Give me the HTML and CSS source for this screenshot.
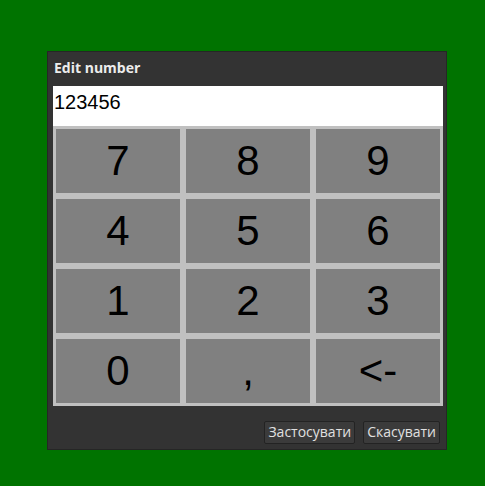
FILE: index.html
```html
<!DOCTYPE html>
<html>
<head>
<meta charset="utf-8">
<link rel="stylesheet" href="styles.css">
</head>
<body>
<div class="dialog">
  <div class="title">Edit number</div>
  <div class="field">123456</div>
  <div class="keypad">
    <div class="key">7</div>
    <div class="key">8</div>
    <div class="key">9</div>
    <div class="key">4</div>
    <div class="key">5</div>
    <div class="key">6</div>
    <div class="key">1</div>
    <div class="key">2</div>
    <div class="key">3</div>
    <div class="key">0</div>
    <div class="key">,</div>
    <div class="key">&lt;-</div>
  </div>
  <div class="actions">
    <div class="btn">Застосувати</div>
    <div class="btn">Скасувати</div>
  </div>
</div>
</body>
</html>
```
FILE: styles.css
```css
html, body {
  margin: 0;
  padding: 0;
}
body {
  background: #007300;
  width: 485px;
  height: 486px;
  overflow: hidden;
  font-family: "Liberation Sans", Arial, sans-serif;
}
.dialog {
  margin: 51px 0 0 47px;
  height: 397px;
  background: #333333;
  border: 1px solid #262626;
  padding: 0 3px 0 5px;
  box-sizing: content-box;
  width: 390px;
  display: flex;
  flex-direction: column;
}
.title {
  height: 34px;
  box-sizing: border-box;
  padding: 6px 0 0 1px;
  color: #ececec;
  font-family: "Open Sans", "DejaVu Sans", sans-serif;
  font-weight: bold;
  font-size: 14px;
}
.field {
  height: 40px;
  background: #ffffff;
  color: #000;
  font-size: 20px;
  line-height: 32px;
  padding-left: 1px;
  box-sizing: border-box;
}
.keypad {
  background: #c0c0c0;
  padding: 3px;
  display: grid;
  grid-template-columns: repeat(3, 124px);
  grid-auto-rows: 64px;
  gap: 6px;
}
.key {
  background: #808080;
  color: #000;
  font-size: 42px;
  display: flex;
  align-items: center;
  justify-content: center;
}
.actions {
  display: flex;
  justify-content: flex-end;
  gap: 8px;
  padding: 15px 3px 0 0;
}
.btn {
  height: 23px;
  box-sizing: border-box;
  border: 1px solid #232323;
  border-radius: 2px;
  background: #3b3b3b;
  color: #e0e0e0;
  font-family: "Open Sans", "DejaVu Sans", sans-serif;
  font-size: 14px;
  line-height: 20px;
  padding: 0 3px;
}
```
